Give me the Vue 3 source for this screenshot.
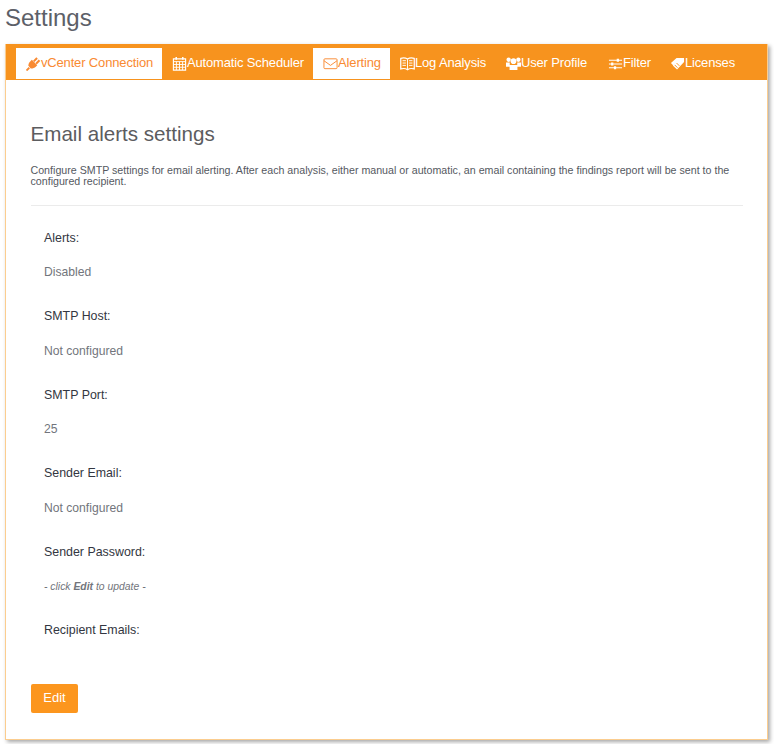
<script setup>
const tabs = [
  { label: 'vCenter Connection', icon: 'plug', active: true, w: 146 },
  { label: 'Automatic Scheduler', icon: 'cal', w: 151 },
  { label: 'Alerting', icon: 'mail', active: true, w: 77 },
  { label: 'Log Analysis', icon: 'book', w: 105 },
  { label: 'User Profile', icon: 'users', w: 102 },
  { label: 'Filter', icon: 'filter', w: 64 },
  { label: 'Licenses', icon: 'tag', w: 82 }
]
const fields = [
  { label: 'Alerts:', value: 'Disabled' },
  { label: 'SMTP Host:', value: 'Not configured' },
  { label: 'SMTP Port:', value: '25' },
  { label: 'Sender Email:', value: 'Not configured' },
  { label: 'Sender Password:', hint: true },
  { label: 'Recipient Emails:', value: '' }
]
</script>

<template>
  <div class="page">
    <h1 class="title">Settings</h1>
    <section class="card">
      <nav class="tabs">
        <a v-for="t in tabs" :key="t.label" class="tab" :class="{ active: t.active }" :style="{ width: t.w + 'px' }">
          <svg class="ico" viewBox="0 0 16 16" aria-hidden="true">
            <template v-if="t.icon === 'plug'">
              <path d="M0.500 15.500L3.500 12.500" stroke="currentColor" stroke-width="2" />
              <path d="M2.500 10.500C2.500 8 3.500 6.500 5 5.200L6.200 4l5.800 5.800-1.300 1.300c-1.500 1.500-3.200 2.300-5.600 2.300z" fill="currentColor" />
              <path d="M7.500 5L11 1.300l1.600 1.500L9 6.500zM10 7.500l3.600-3.700 1.600 1.500-3.700 3.700z" fill="currentColor" />
            </template>
            <template v-else-if="t.icon === 'cal'">
              <path d="M1.500 3h13v12h-13z" fill="none" stroke="currentColor" stroke-width="1.200" />
              <path d="M1.500 6h13M1.500 9h13M1.500 12h13M4.700 6v9M8 6v9M11.300 6v9" stroke="currentColor" />
              <path d="M4.500 1v3M11.500 1v3" stroke="currentColor" stroke-width="1.600" />
            </template>
            <template v-else-if="t.icon === 'mail'">
              <rect x="1" y="3" width="14" height="10.500" rx="1" fill="none" stroke="currentColor" />
              <path d="M1 5l7 5 7-5" fill="none" stroke="currentColor" />
            </template>
            <template v-else-if="t.icon === 'book'">
              <path d="M0.800 2.500c2.700-.8 5.200-.6 7.200.8 2-1.400 4.500-1.600 7.200-.8v11.300c-2.700-.8-5.200-.6-7.200.8-2-1.400-4.500-1.600-7.200-.8z" fill="none" stroke="currentColor" stroke-width="1.300" />
              <path d="M8 3.500V14.500M2.700 5h3.600M2.700 7.500h3.600M2.700 10h3.600M9.700 5h3.600M9.700 7.500h3.600M9.700 10h3.600" stroke="currentColor" />
            </template>
            <template v-else-if="t.icon === 'users'">
              <circle cx="8" cy="5.500" r="3" fill="currentColor" />
              <circle cx="2.800" cy="4" r="2.300" fill="currentColor" />
              <circle cx="13.200" cy="4" r="2.300" fill="currentColor" />
              <path d="M3.800 9.500h8.400v5.500H3.800zM0 7h4v4.500H0zM12 7h4v4.500h-4z" fill="currentColor" />
            </template>
            <template v-else-if="t.icon === 'filter'">
              <path d="M1 4.500h14M1 8.500h14M1 12.500h14" stroke="currentColor" stroke-width="1.200" />
              <path d="M10.500 3v3M4.500 7v3M7.500 11v3" stroke="currentColor" stroke-width="2.400" />
            </template>
            <template v-else>
              <path d="M7 2h4.500L3.500 10 1 7.500z" fill="currentColor" />
              <path d="M10.500 2H15v4.500L7.500 14.500 3 10z" fill="currentColor" />
              <path d="M5 9.500l3 3M7 7.500l3 3" stroke="#f7931e" />
            </template>
          </svg>
          <span>{{ t.label }}</span>
        </a>
      </nav>
      <div class="body">
        <h2 class="heading">Email alerts settings</h2>
        <p class="desc">Configure SMTP settings for email alerting. After each analysis, either manual or automatic, an email containing the findings report will be sent to the configured recipient.</p>
        <hr class="rule" />
        <div class="fields">
          <div v-for="f in fields" :key="f.label" class="field">
            <div class="label">{{ f.label }}</div>
            <div v-if="f.hint" class="hint">- click <b>Edit</b> to update -</div>
            <div v-else class="value">{{ f.value }}</div>
          </div>
        </div>
        <button class="edit" type="button">Edit</button>
      </div>
    </section>
  </div>
</template>

<style>
html, body { margin: 0; background: #fff; }
</style>

<style scoped>
.page {
  height: 744px;
  overflow: hidden;
  font-family: "Liberation Sans", Arial, sans-serif;
  color: #55595f;
}
.title {
  margin: 0;
  padding: 4px 0 0 5px;
  height: 40px;
  box-sizing: border-box;
  font-size: 24px;
  line-height: 27px;
  font-weight: 400;
  color: #5c6068;
}
.card {
  margin: 4px 6px 0 5px;
  height: 696px;
  box-sizing: border-box;
  background: #fff;
  border: 1px solid #fbcd8f;
  border-top: 0;
  box-shadow: 2px 2px 4px rgba(0, 0, 0, 0.35);
}
.tabs {
  display: flex;
  height: 36px;
  box-sizing: border-box;
  padding: 4px 0 1px 10px;
  background: #f7931e;
}
.tab {
  display: flex;
  align-items: center;
  justify-content: center;
  flex: none;
  color: #fff;
  font-size: 13px;
  letter-spacing: -0.15px;
  padding: 0 0 3px 1px;
  box-sizing: border-box;
}
.tab.active {
  background: #fff;
  color: #f98a32;
}
.ico {
  width: 15px;
  height: 15px;
  flex: none;
  margin-top: 3px;
}
.body {
  padding: 43px 24px 0 24.500px;
}
.heading {
  margin: 0;
  font-size: 20.600px;
  line-height: 22px;
  font-weight: 400;
  color: #5c5c5f;
}
.desc {
  margin: 20px 0 0;
  font-size: 10.660px;
  line-height: 11px;
  color: #55595f;
}
.rule {
  border: 0;
  border-top: 1px solid #ebebeb;
  margin: 18px 0 0;
}
.fields {
  padding: 24.500px 0 0 13.500px;
}
.field {
  height: 78.500px;
}
.label {
  font-size: 12.400px;
  line-height: 14px;
  color: #333641;
}
.value {
  margin-top: 20.500px;
  font-size: 12.150px;
  line-height: 14px;
  color: #72757c;
}
.hint {
  margin-top: 22px;
  font-size: 10.400px;
  line-height: 12px;
  font-style: italic;
  color: #72757c;
}
.edit {
  display: block;
  margin-top: -18px;
  width: 47px;
  height: 29px;
  padding: 0 0 2px 1px;
  border: 0;
  border-radius: 2px;
  background: #fc961e;
  color: #fff;
  font: 13px "Liberation Sans", Arial, sans-serif;
}
</style>
